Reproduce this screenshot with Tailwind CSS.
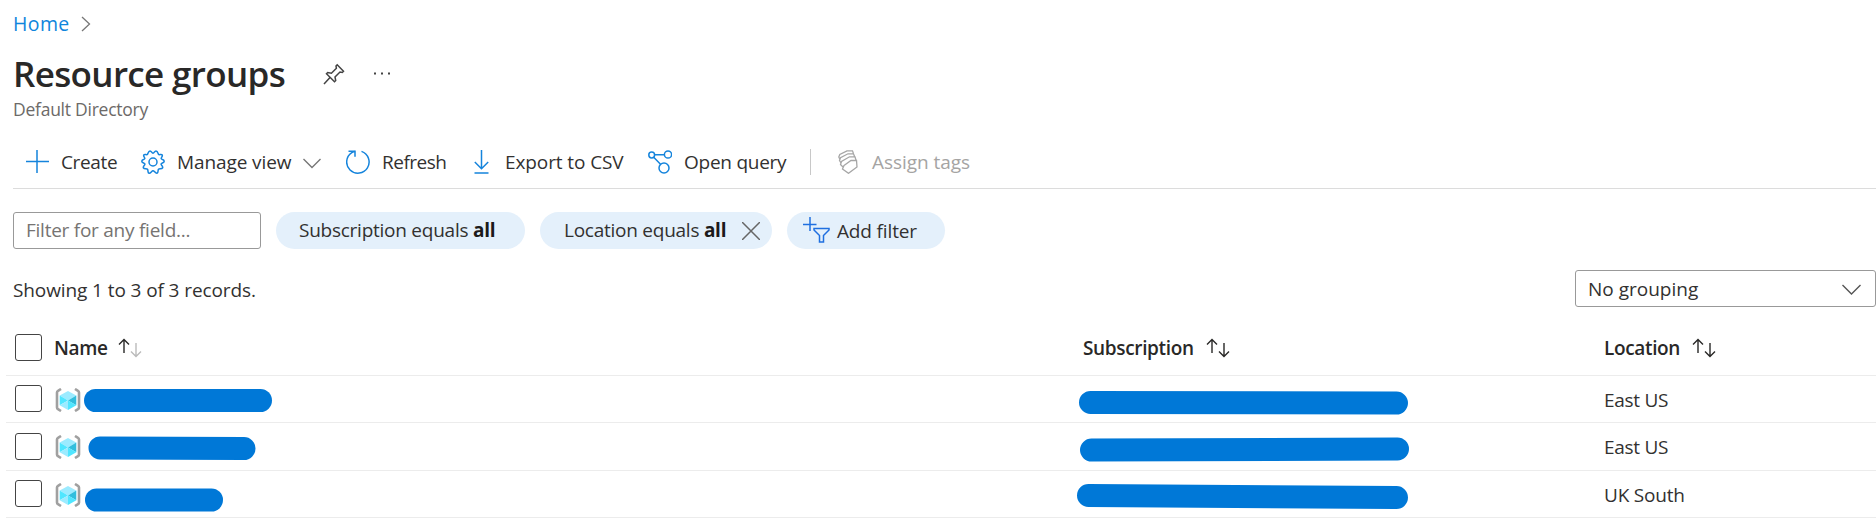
<!DOCTYPE html>
<html lang="en">
<head>
<meta charset="utf-8">
<title>Resource groups</title>
<script src="https://cdn.jsdelivr.net/npm/@tailwindcss/browser@4"></script>
</head>
<body class="h-[527px] w-[1876px] overflow-hidden bg-white font-['Open_Sans',sans-serif] text-[19px] leading-[26px] tracking-[-0.25px] whitespace-nowrap text-[#323130]">
<svg class="hidden">
  <symbol id="rg" viewBox="0 0 26 24">
    <path d="M6 1 3 2.900a2 2 0 0 0-1 1.700v14.800a2 2 0 0 0 1 1.700L6 23M20 1l3 1.900a2 2 0 0 1 1 1.700v14.800a2 2 0 0 1-1 1.700L20 23" fill="none" stroke="#a0a0a0" stroke-width="2.600"/>
    <path d="M13 3 21.300 7.500 13 12.500 4.700 7.500z" fill="#9cebff"/>
    <path d="M4.700 7.500 13 12.500 4.700 17.300z" fill="#50e6ff"/>
    <path d="M21.300 7.500 13 12.500l8.300 4.800z" fill="#32bedd"/>
    <path d="M4.700 17.300 13 12.500V22z" fill="#9cebff"/>
    <path d="M21.300 17.300 13 12.500V22z" fill="#50e6ff"/>
  </symbol>
  <symbol id="up" viewBox="0 0 12 16"><path d="M6 15V1.500M1 6.500l5-5 5 5" fill="none" stroke="currentColor" stroke-width="1.400"/></symbol>
  <symbol id="down" viewBox="0 0 12 16"><path d="M6 1v13.500M1 9.500l5 5 5-5" fill="none" stroke="currentColor" stroke-width="1.400"/></symbol>
</svg>

<header class="pl-[13px]">
  <nav class="flex h-[47px] items-center">
    <a class="w-[68px] text-[19.5px] tracking-[0.4px] text-[#0f86dc]">Home</a>
    <svg class="h-4 w-[10px]" viewBox="0 0 10 16" fill="none" stroke="#777" stroke-width="1.300"><path d="M1 1l7.500 7L1 15"/></svg>
  </nav>
  <div class="flex h-[52px] items-center pt-px">
    <h1 class="w-[310px] text-[35px] leading-[52px] font-semibold tracking-[-0.65px] text-[#292827]">Resource groups</h1>
    <svg class="h-[22px] w-[22px]" viewBox="0 0 22 22" fill="none" stroke="#444" stroke-width="1.500"><path d="M1 21l6-6.500M3.500 10.800l8 8 1.200-1.200-.7-3.600 5-5 2.300.5 1.200-1.200-6.300-6.600-1.200 1.200.4 2.400-5 5-3.700-.7z"/></svg>
    <svg class="ml-[28px] h-[3px] w-[18px]" viewBox="0 0 18 3" fill="#444"><path d="M1 .5h2v2H1zM8 .5h2v2H8zM15 .5h2v2h-2z"/></svg>
  </div>
  <p class="h-[31px] text-[17.5px] leading-[20px] text-[#6c6a68]">Default Directory</p>
</header>

<div class="ml-[13px] flex h-[59px] items-center border-b border-[#dcdcdc] pt-[5px] pl-[13px]">
  <svg class="h-[23px] w-[23px]" viewBox="0 0 23 23" stroke="#1584dc" stroke-width="1.500"><path d="M11 0v23M0 11.500h23"/></svg>
  <span class="ml-3 w-[80px] tracking-[-0.35px]">Create</span>
  <svg class="h-6 w-6" viewBox="0 0 24 24" fill="none" stroke="#1584dc" stroke-width="1.500" stroke-linejoin="round"><circle cx="12" cy="12" r="4"/><path d="M12 3.300C13.300 3.300 13.400.9 15 .9S17 3.300 17.500 4.300 20.400 3.800 21.200 5s-1.300 2.500-1 3.600S23.200 9.500 23.200 11.200c0 1.800-2.700 1.600-3.100 2.700s2.300 2.500 1.500 4-3.200.4-4.100 1.400.2 3.500-1.500 3.900S13.300 20.700 12 20.700 9.600 23.600 8 23.200s-.6-2.900-1.500-3.900-3.300.1-4.100-1.400 1.900-2.900 1.500-4S.8 13 .8 11.200c0-1.700 2.700-1.500 3-2.600S2 6.200 2.800 5 5.900 5.300 6.500 4.300 7.400.9 9 .9 10.700 3.300 12 3.300z"/></svg>
  <span class="ml-3 w-[126px] tracking-[-0.1px]">Manage view</span>
  <svg class="mt-1 h-[11px] w-[18px]" viewBox="0 0 18 11" fill="none" stroke="#777" stroke-width="1.400"><path d="M.5 1 9 9.500 17.500 1"/></svg>
  <svg class="ml-[25px] h-6 w-6" viewBox="0 0 24 24" fill="none" stroke="#1584dc" stroke-width="1.500"><path d="M15.500 1.400A11.200 11.200 0 1 1 5.800 2.600L9 1M2.500 1.200H9v5.500"/></svg>
  <span class="ml-3 w-[92px] tracking-[-0.5px]">Refresh</span>
  <svg class="h-6 w-[15px]" viewBox="0 0 15 24" fill="none" stroke="#1584dc" stroke-width="1.500"><path d="M7.500 0v18.500M.8 12l6.700 6.700 6.700-6.700M.5 23h14"/></svg>
  <span class="ml-4 w-[143px] tracking-[-0.1px]">Export to CSV</span>
  <svg class="h-6 w-6" viewBox="0 0 24 24" fill="none" stroke="#1584dc" stroke-width="1.500"><circle cx="3.700" cy="5" r="2.900"/><circle cx="20" cy="4.500" r="3.600"/><circle cx="16" cy="18" r="5"/><path d="M6.600 4.800h9.800M5.700 7.200l6.800 7"/></svg>
  <span class="ml-3 w-[126px]">Open query</span>
  <span class="h-[26px] w-px bg-[#c8c8c8]"></span>
  <svg class="ml-[27px] h-6 w-5" viewBox="0 0 20 24" fill="none" stroke="#a6a6a6" stroke-width="1.300"><path d="M6 15.500 13 10.500h5.500l.5 6.500-8.500 6.300L4.500 19z"/><path d="M5 17 2.500 14.500 3.500 11.500l8-4.700h5.500l1 3.500M3 13 1.500 10.500l1-2.700L10 3.800h5.500l1.200 3M2 9.500.8 7l1-2.500L9 .8h5.500l1 3"/></svg>
  <span class="ml-[14px] tracking-[-0.05px] text-[#a5a4a3]">Assign tags</span>
</div>

<div class="mt-[23px] ml-[13px] flex h-[37px]">
  <div class="flex w-[248px] items-center rounded-[3px] border border-[#999] pb-px pl-3 text-[#767472]">Filter for any field...</div>
  <div class="ml-[15px] flex w-[249px] items-center rounded-full bg-[#e4f0fb] pb-[2px] pl-[23px]"><span>Subscription equals <b class="text-[#1b1a19]">all</b></span></div>
  <div class="ml-[15px] flex w-[232px] items-center rounded-full bg-[#e4f0fb] pl-[24px]"><span class="w-[178px] pb-[2px]">Location equals <b class="text-[#1b1a19]">all</b></span>
    <svg class="h-[18px] w-[18px]" viewBox="0 0 18 18" stroke="#666" stroke-width="1.500"><path d="M0 0l18 18M18 0 0 18"/></svg></div>
  <div class="ml-[15px] flex w-[158px] items-center rounded-full bg-[#e4f0fb] pl-[16px]">
    <svg class="-mt-px h-[26px] w-[27px]" viewBox="0 0 27 26" fill="none" stroke="#1f6fe0" stroke-width="1.500"><path d="M7 0v14M0 7.500h13.500M11 11.500h15v1.500l-5.500 5.500V25h-4v-6.500L11 13z"/></svg>
    <span class="ml-[7px] tracking-[-0.15px]">Add filter</span></div>
</div>

<div class="mt-[21px] ml-[13px] flex h-[37px] items-center justify-between">
  <span class="pt-[2px] tracking-[-0.1px]">Showing 1 to 3 of 3 records.</span>
  <div class="flex h-[37px] w-[301px] items-center justify-between rounded-[3px] border border-[#999] pr-[14px] pl-3"><span class="tracking-normal">No grouping</span>
    <svg class="mt-px h-[11px] w-[19px]" viewBox="0 0 19 11" fill="none" stroke="#555" stroke-width="1.400"><path d="M.5 1l9 9 9-9"/></svg></div>
</div>

<main class="mt-[13px] ml-[6px]">
  <div class="flex h-[56px] items-center border-b border-[#ececec] pl-[9px] font-semibold tracking-[-0.35px] text-[#292827]">
    <span class="h-[27px] w-[27px] rounded-[3px] border border-[#444]"></span>
    <div class="ml-3 flex w-[1029px] items-center"><span class="w-[64px]">Name</span><svg class="mb-1 h-4 w-3"><use href="#up"/></svg><svg class="mt-1 h-4 w-3 text-[#bbb]"><use href="#down"/></svg></div>
    <div class="flex w-[521px] items-center"><span class="w-[123px]">Subscription</span><svg class="mb-1 h-4 w-3"><use href="#up"/></svg><svg class="mt-1 h-4 w-3"><use href="#down"/></svg></div>
    <span class="w-[88px]">Location</span><svg class="mb-1 h-4 w-3"><use href="#up"/></svg><svg class="mt-1 h-4 w-3"><use href="#down"/></svg>
  </div>
  <div class="flex h-[47px] items-center border-b border-[#ececec] pl-[9px]">
    <span class="mb-[2px] h-[27px] w-[27px] rounded-[3px] border border-[#444]"></span>
    <svg class="mt-[2px] ml-[13px] h-6 w-[26px]"><use href="#rg"/></svg>
    <svg class="ml-[3px] h-[46px] w-[993px]" stroke="#0078d7" stroke-width="23" stroke-linecap="round"><path d="M11.500 24.500H176.500"/></svg>
    <svg class="h-[46px] w-[340px]" stroke="#0078d7" stroke-width="23" stroke-linecap="round"><path d="M13.500 26.500 319.500 27"/></svg>
    <span class="ml-[187px] pt-px tracking-[-0.3px]">East US</span>
  </div>
  <div class="flex h-[48px] items-center border-b border-[#ececec] pl-[9px]">
    <span class="mb-px h-[27px] w-[27px] rounded-[3px] border border-[#444]"></span>
    <svg class="mt-px ml-[13px] h-6 w-[26px]"><use href="#rg"/></svg>
    <svg class="ml-[3px] h-[46px] w-[993px]" stroke="#0078d7" stroke-width="23" stroke-linecap="round"><path d="M16 24 160 24.500"/></svg>
    <svg class="h-[46px] w-[340px]" stroke="#0078d7" stroke-width="23" stroke-linecap="round"><path d="M14.500 26 320.500 25"/></svg>
    <span class="ml-[187px] tracking-[-0.3px]">East US</span>
  </div>
  <div class="flex h-[47px] items-center border-b border-[#ececec] pl-[9px]">
    <span class="mb-[2px] h-[27px] w-[27px] rounded-[3px] border border-[#444]"></span>
    <svg class="mt-[2px] ml-[13px] h-6 w-[26px]"><use href="#rg"/></svg>
    <svg class="ml-[3px] h-[46px] w-[993px]" stroke="#0078d7" stroke-width="23" stroke-linecap="round"><path d="M12.500 29H127.500"/></svg>
    <svg class="h-[46px] w-[340px]" stroke="#0078d7" stroke-width="23" stroke-linecap="round"><path d="M11.500 24.500 319.500 26.500"/></svg>
    <span class="ml-[187px] pt-px tracking-[-0.2px]">UK South</span>
  </div>
</main>
</body>
</html>
